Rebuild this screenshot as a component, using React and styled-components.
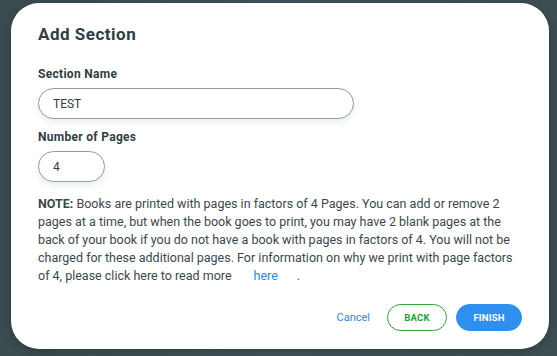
import React from 'react';
import styled, { createGlobalStyle } from 'styled-components';

const GlobalStyle = createGlobalStyle`
  html, body {
    margin: 0;
    padding: 0;
    width: 100%;
    height: 100%;
    overflow: hidden;
  }
  body {
    background: #3f5055;
    font-family: 'Roboto', 'Liberation Sans', sans-serif;
  }
`;

const Backdrop = styled.div`
  width: 557px;
  height: 356px;
  padding: 3px 8px 7px 11px;
  box-sizing: border-box;
  background: linear-gradient(90deg, #3b4b50 0%, #43545a 50%, #3d4e53 100%);
`;

const Modal = styled.div`
  height: 100%;
  background: #ffffff;
  border-radius: 28px;
  padding: 19px 27px 18px 27px;
  box-sizing: border-box;
  display: flex;
  flex-direction: column;
  box-shadow: 0 2px 10px rgba(0, 0, 0, 0.25);
`;

const Title = styled.h2`
  margin: 0 0 20px;
  font-size: 17px;
  line-height: 24px;
  font-weight: 700;
  letter-spacing: 0.5px;
  color: #2f3e44;
`;

const Field = styled.div`
  display: flex;
  flex-direction: column;
  align-items: flex-start;
  margin-bottom: ${({ $gap }) => $gap}px;
`;

const Label = styled.label`
  font-size: 12px;
  line-height: 16px;
  font-weight: 700;
  letter-spacing: 0.3px;
  color: #2f3e44;
  margin-bottom: 6px;
`;

const Input = styled.input`
  width: ${({ $width }) => $width}px;
  height: 31px;
  box-sizing: border-box;
  border: 1px solid #8d9ea5;
  border-radius: 16px;
  padding: 0 14px;
  font-family: inherit;
  font-size: 12px;
  color: #333d42;
  background: #fff;
  box-shadow: 0 3px 6px rgba(120, 150, 170, 0.18);
  outline: none;
`;

const Note = styled.p`
  margin: 0;
  font-size: 12.5px;
  line-height: 18px;
  color: #3b474d;
`;

const Link = styled.a`
  color: #2f88e0;
  text-decoration: none;
  padding: 0 19px 0 22px;
`;

const Actions = styled.div`
  margin-top: auto;
  display: flex;
  justify-content: flex-end;
  align-items: center;
  gap: 9px;
`;

const TextButton = styled.button`
  border: none;
  background: none;
  font-family: inherit;
  font-size: 11px;
  color: #2f88e0;
  padding: 0;
  margin-right: 8px;
  cursor: pointer;
`;

const PillButton = styled.button`
  height: 27px;
  width: ${({ $width }) => $width}px;
  border-radius: 14px;
  font-family: inherit;
  font-size: 9.5px;
  font-weight: 700;
  letter-spacing: 0.2px;
  cursor: pointer;
  border: 1px solid ${({ $primary }) => ($primary ? '#2e8ff0' : '#2aa33c')};
  background: ${({ $primary }) => ($primary ? '#2e8ff0' : '#fff')};
  color: ${({ $primary }) => ($primary ? '#fff' : '#20a033')};
`;

export default function App() {
  return (
    <>
      <GlobalStyle />
      <Backdrop>
        <Modal>
          <Title>Add Section</Title>
          <Field $gap={10}>
            <Label>Section Name</Label>
            <Input $width={316} defaultValue="TEST" />
          </Field>
          <Field $gap={13}>
            <Label>Number of Pages</Label>
            <Input $width={67} defaultValue="4" />
          </Field>
          <Note>
            <b>NOTE:</b> Books are printed with pages in factors of 4 Pages. You can add or remove 2
            pages at a time, but when the book goes to print, you may have 2 blank pages at the
            back of your book if you do not have a book with pages in factors of 4. You will not be
            charged for these additional pages. For information on why we print with page factors
            of 4, please click here to read more<Link href="#">here</Link>.
          </Note>
          <Actions>
            <TextButton>Cancel</TextButton>
            <PillButton $width={60}>BACK</PillButton>
            <PillButton $width={66} $primary>FINISH</PillButton>
          </Actions>
        </Modal>
      </Backdrop>
    </>
  );
}
